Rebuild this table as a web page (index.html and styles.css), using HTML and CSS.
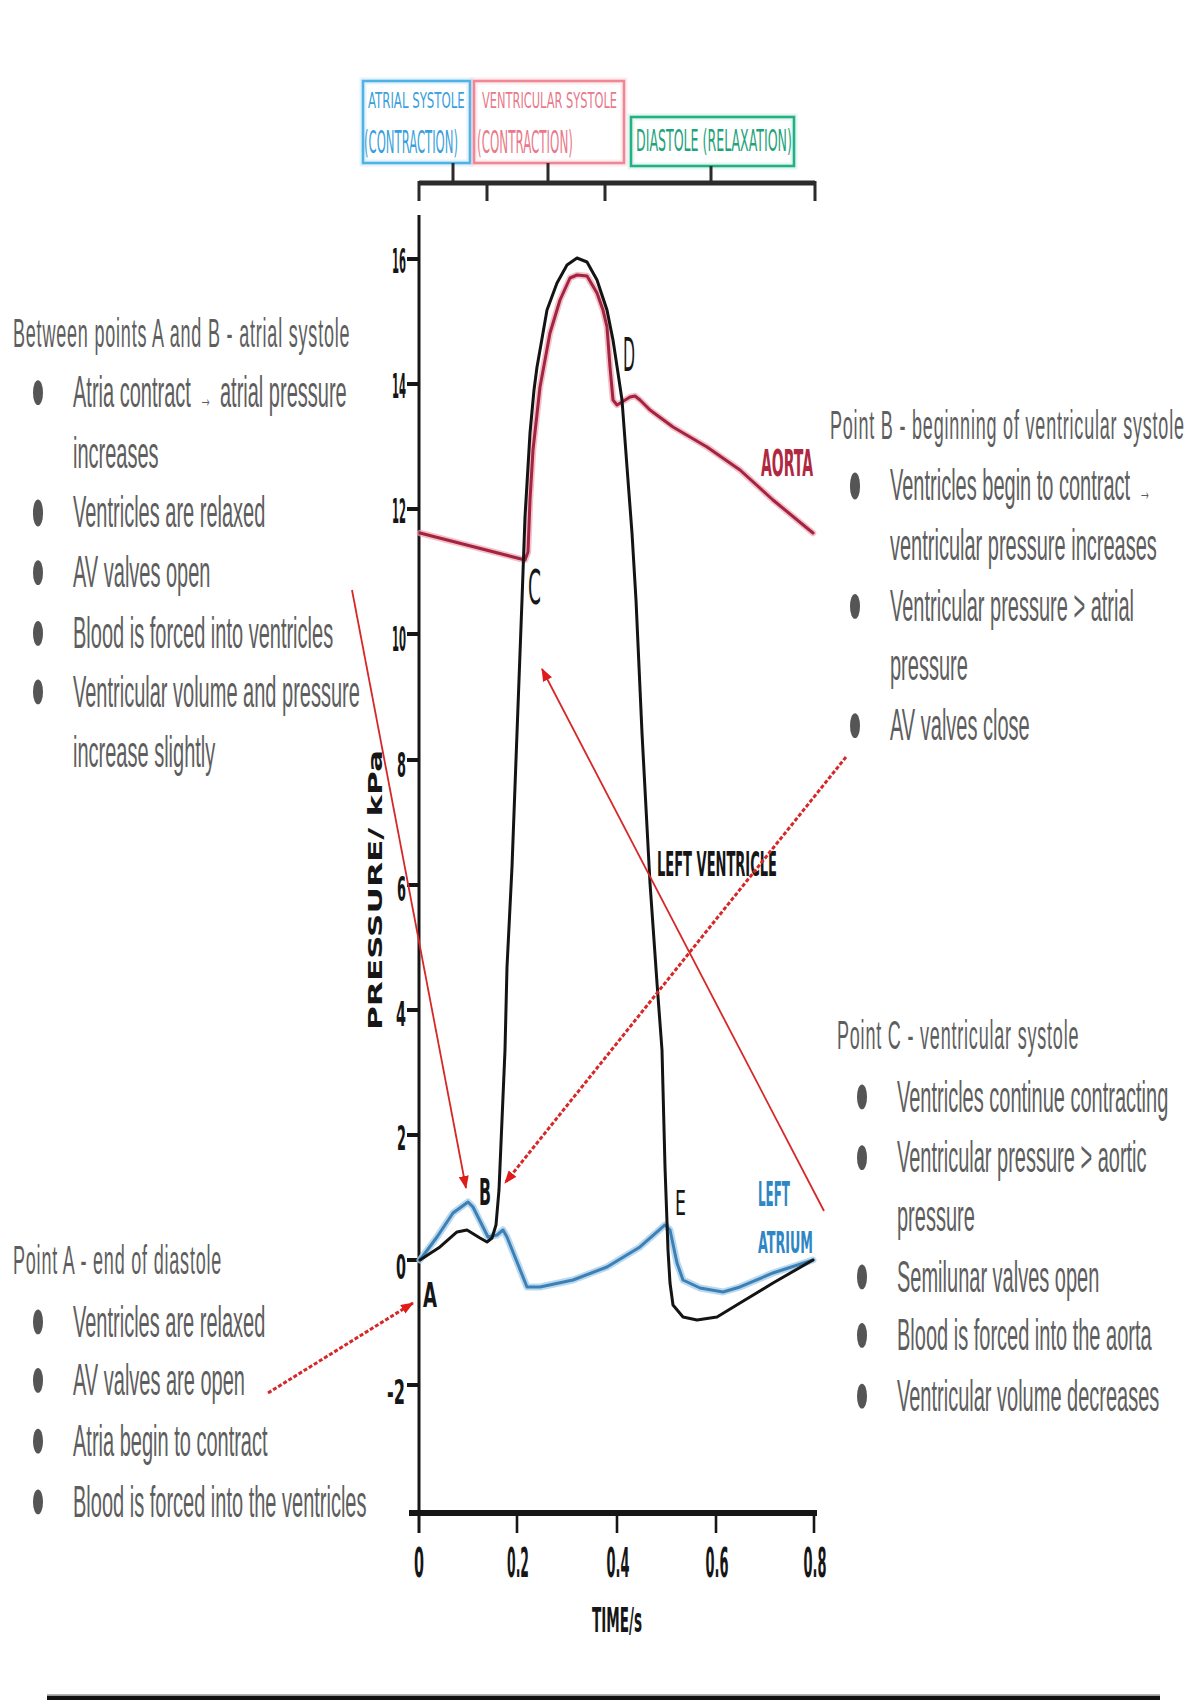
FILE: index.html
```html
<!DOCTYPE html>
<html lang="en">
<head>
<meta charset="utf-8">
<title>Cardiac cycle – pressure changes in the left side of the heart</title>
<link rel="stylesheet" href="styles.css">
</head>
<body>
<main class="page">
  <svg class="chart" viewBox="0 0 1200 1695" preserveAspectRatio="none" role="img" aria-label="Pressure changes during the cardiac cycle">
    <defs>
      <marker id="ah" viewBox="0 0 13 10" refX="12" refY="5" markerWidth="13" markerHeight="10" markerUnits="userSpaceOnUse" orient="auto">
        <path class="ah" d="M0,0 L13,5 L0,10 z"/>
      </marker>
    </defs>

    <!-- phase boxes -->
    <rect class="box-glow glow-blue" x="363" y="81" width="107" height="82"/>
    <rect class="box box-blue" x="363" y="81" width="107" height="82"/>
    <text class="hand t-blue ph-sm" transform="translate(368 108) scale(0.59 1)" textLength="164" lengthAdjust="spacingAndGlyphs">ATRIAL SYSTOLE</text>
    <text class="hand t-blue ph-lg" transform="translate(364 153) scale(0.4 1)" textLength="235" lengthAdjust="spacingAndGlyphs">(CONTRACTION)</text>

    <rect class="box-glow glow-pink" x="474" y="81" width="150" height="82"/>
    <rect class="box box-pink" x="474" y="81" width="150" height="82"/>
    <text class="hand t-pink ph-sm" transform="translate(482 108) scale(0.577 1)" textLength="234" lengthAdjust="spacingAndGlyphs">VENTRICULAR SYSTOLE</text>
    <text class="hand t-pink ph-lg" transform="translate(477 153) scale(0.41 1)" textLength="234" lengthAdjust="spacingAndGlyphs">(CONTRACTION)</text>

    <rect class="box-glow glow-green" x="631" y="117" width="163" height="49"/>
    <rect class="box box-green" x="631" y="117" width="163" height="49"/>
    <text class="hand t-green ph-md" transform="translate(636 151) scale(0.464 1)" textLength="336" lengthAdjust="spacingAndGlyphs">DIASTOLE (RELAXATION)</text>

    <!-- bracket -->
    <path class="ink-line bracket-h" d="M419,183 L815,183"/>
    <path class="ink-line bracket-v" d="M419,181 V201 M487,181 V201 M605,181 V201 M815,181 V201 M453,163 V183 M548,163 V183 M711,166 V183"/>

    <!-- axes -->
    <path class="ink-line y-axis" d="M419,215 V1533"/>
    <path class="ink-line x-axis" d="M409,1513 H817"/>
    <path class="ink-line x-ticks" d="M517,1513 V1533 M617,1513 V1533 M716,1513 V1533 M814,1513 V1533"/>
    <path class="ink-line y-ticks" d="M407,259 H419 M407,384 H419 M407,509 H419 M407,634 H419 M407,760 H419 M407,885 H419 M407,1010 H419 M407,1135 H419 M407,1260 H419 M407,1385 H419"/>

    <g class="hand ink tick-lbl">
      <text x="406" y="273" text-anchor="end" textLength="14" lengthAdjust="spacingAndGlyphs">16</text>
      <text x="406" y="398" text-anchor="end" textLength="14" lengthAdjust="spacingAndGlyphs">14</text>
      <text x="406" y="523" text-anchor="end" textLength="14" lengthAdjust="spacingAndGlyphs">12</text>
      <text x="406" y="651" text-anchor="end" textLength="14" lengthAdjust="spacingAndGlyphs">10</text>
      <text x="406" y="777" text-anchor="end" textLength="9" lengthAdjust="spacingAndGlyphs">8</text>
      <text x="406" y="901" text-anchor="end" textLength="9" lengthAdjust="spacingAndGlyphs">6</text>
      <text x="406" y="1026" text-anchor="end" textLength="10" lengthAdjust="spacingAndGlyphs">4</text>
      <text x="406" y="1150" text-anchor="end" textLength="9" lengthAdjust="spacingAndGlyphs">2</text>
      <text x="406" y="1279" text-anchor="end" textLength="10" lengthAdjust="spacingAndGlyphs">0</text>
      <text x="405" y="1404" text-anchor="end" textLength="18" lengthAdjust="spacingAndGlyphs">-2</text>
    </g>

    <g class="hand ink x-lbl">
      <text x="419" y="1577" text-anchor="middle" textLength="10" lengthAdjust="spacingAndGlyphs">0</text>
      <text x="518" y="1577" text-anchor="middle" textLength="22" lengthAdjust="spacingAndGlyphs">0.2</text>
      <text x="618" y="1577" text-anchor="middle" textLength="23" lengthAdjust="spacingAndGlyphs">0.4</text>
      <text x="717" y="1577" text-anchor="middle" textLength="23" lengthAdjust="spacingAndGlyphs">0.6</text>
      <text x="815" y="1577" text-anchor="middle" textLength="23" lengthAdjust="spacingAndGlyphs">0.8</text>
    </g>
    <text class="hand ink axis-title" x="617" y="1632" text-anchor="middle" textLength="50" lengthAdjust="spacingAndGlyphs">TIME/s</text>
    <text class="hand ink axis-title-y" x="382" y="890" text-anchor="middle" textLength="280" lengthAdjust="spacingAndGlyphs" transform="rotate(-90 382 890)">PRESSURE/ kPa</text>

    <!-- curves -->
    <polyline class="curve ao-halo" points="420,533 525,560 528,552 530,500 533,450 540,387 550,333 560,300 570,278 577,275 587,276 597,293 603,310 607,327 610,367 613,400 617,405 622,402 630,397 635,396 640,400 650,410 673,427 707,447 740,470 773,500 813,533"/>
    <polyline class="curve ao" points="420,533 525,560 528,552 530,500 533,450 540,387 550,333 560,300 570,278 577,275 587,276 597,293 603,310 607,327 610,367 613,400 617,405 622,402 630,397 635,396 640,400 650,410 673,427 707,447 740,470 773,500 813,533"/>

    <polyline class="curve la-halo" points="420,1260 437,1237 453,1213 468,1202 473,1207 488,1237 497,1235 503,1230 507,1237 527,1287 540,1287 573,1280 607,1267 640,1247 665,1225 670,1230 677,1263 683,1280 700,1288 723,1292 740,1287 773,1273 813,1260"/>
    <polyline class="curve la" points="420,1260 437,1237 453,1213 468,1202 473,1207 488,1237 497,1235 503,1230 507,1237 527,1287 540,1287 573,1280 607,1267 640,1247 665,1225 670,1230 677,1263 683,1280 700,1288 723,1292 740,1287 773,1273 813,1260"/>

    <polyline class="curve lv" points="420,1260 440,1247 457,1232 467,1230 480,1238 487,1242 492,1238 496,1225 499,1190 502,1120 505,1050 507,967 512,867 517,733 522,600 525,517 530,433 534,390 537,367 540,350 547,310 557,283 567,265 577,258 587,262 597,280 607,310 613,340 618,373 622,400 627,467 632,533 636,600 642,733 650,883 657,983 662,1050 665,1167 668,1250 670,1283 673,1305 683,1317 697,1320 717,1317 740,1303 773,1283 813,1260"/>

    <!-- curve labels -->
    <text class="hand t-aorta lbl-aorta" transform="translate(761 476) scale(0.394 1)" textLength="132" lengthAdjust="spacingAndGlyphs">AORTA</text>
    <text class="hand ink lbl-lv" x="657" y="876" textLength="120" lengthAdjust="spacingAndGlyphs">LEFT VENTRICLE</text>
    <text class="hand t-atrium lbl-la1" x="758" y="1206" textLength="32" lengthAdjust="spacingAndGlyphs">LEFT</text>
    <text class="hand t-atrium lbl-la2" x="758" y="1253" textLength="55" lengthAdjust="spacingAndGlyphs">ATRIUM</text>

    <g class="hand ink pt-lbl">
      <text class="pt-a" x="423" y="1307" textLength="14" lengthAdjust="spacingAndGlyphs">A</text>
      <text class="pt-b" x="479" y="1205" textLength="12" lengthAdjust="spacingAndGlyphs">B</text>
      <text class="pt-c" x="528" y="604" textLength="13" lengthAdjust="spacingAndGlyphs">C</text>
      <text class="pt-d" x="623" y="371" textLength="12" lengthAdjust="spacingAndGlyphs">D</text>
      <text class="pt-e" x="675" y="1215" textLength="11" lengthAdjust="spacingAndGlyphs">E</text>
    </g>

    <!-- annotation arrows -->
    <path class="arrow" d="M352,590 L466,1188" marker-end="url(#ah)"/>
    <path class="arrow dotted" d="M846,757 L505,1183" marker-end="url(#ah)"/>
    <path class="arrow" d="M824,1211 L542,669" marker-end="url(#ah)"/>
    <path class="arrow dotted" d="M268,1393 L413,1303" marker-end="url(#ah)"/>
  </svg>

  <section class="col col-left">
    <div class="note note-ab">
      <p class="note-title">Between points A and B - atrial systole</p>
      <ul class="points">
        <li>Atria contract <span class="arr">→</span> atrial pressure<br>increases</li>
        <li>Ventricles are relaxed</li>
        <li>AV valves open</li>
        <li>Blood is forced into ventricles</li>
        <li>Ventricular volume and pressure<br>increase slightly</li>
      </ul>
    </div>
    <div class="note note-a">
      <p class="note-title">Point A - end of diastole</p>
      <ul class="points">
        <li>Ventricles are relaxed</li>
        <li>AV valves are open</li>
        <li>Atria begin to contract</li>
        <li>Blood is forced into the ventricles</li>
      </ul>
    </div>
  </section>

  <section class="col col-right">
    <div class="note note-b">
      <p class="note-title">Point B - beginning of ventricular systole</p>
      <ul class="points">
        <li>Ventricles begin to contract <span class="arr">→</span><br>ventricular pressure increases</li>
        <li>Ventricular pressure &gt; atrial<br>pressure</li>
        <li>AV valves close</li>
      </ul>
    </div>
    <div class="note note-c">
      <p class="note-title">Point C - ventricular systole</p>
      <ul class="points">
        <li>Ventricles continue contracting</li>
        <li>Ventricular pressure &gt; aortic<br>pressure</li>
        <li>Semilunar valves open</li>
        <li>Blood is forced into the aorta</li>
        <li>Ventricular volume decreases</li>
      </ul>
    </div>
  </section>

  <div class="rule"></div>
</main>
</body>
</html>
```

FILE: styles.css
```css
html, body {
  margin: 0;
  padding: 0;
  background: #ffffff;
}

body {
  width: 1200px;
  height: 1700px;
  overflow: hidden;
}

/* The whole sheet is drawn at a squashed height and stretched vertically,
   as the original slide image was. */
.page {
  width: 1200px;
  height: 755.56px;
  display: grid;
  grid-template-columns: 390px 440px 370px;
  grid-template-rows: 753.33px 2.23px;
  transform: scaleY(2.25);
  transform-origin: 0 0;
  font-family: "Liberation Sans", Arial, sans-serif;
  color: #5e5e5e;
}

.chart {
  grid-column: 1 / -1;
  grid-row: 1;
  display: block;
  width: 1200px;
  height: 753.33px;
}

.col-left {
  grid-column: 1;
  grid-row: 1;
  padding: 134.7px 0 0 13px;
}

.col-right {
  grid-column: 3;
  grid-row: 1;
  padding: 175.9px 10px 0 0;
}

.note-a {
  margin-top: 199.9px;
}

.note-c {
  margin-top: 112px;
  margin-left: 7px;
}

.note-title {
  margin: 0;
  font-size: 18px;
  letter-spacing: 0.8px;
  line-height: 26.58px;
  white-space: nowrap;
}

.points {
  list-style: none;
  margin: 0;
  padding: 0 0 0 60px;
  font-size: 20px;
  line-height: 26.58px;
}

.points li {
  position: relative;
  white-space: nowrap;
}

.points li::before {
  content: "";
  position: absolute;
  left: -40px;
  top: 8px;
  width: 10px;
  height: 11.1px;
  border-radius: 50%;
  background: #555555;
}

.arr {
  font-size: 12px;
  line-height: 1;
  padding: 0 3px;
}

.rule {
  grid-column: 1 / -1;
  grid-row: 2;
  margin-left: 47px;
  width: 1113px;
  background: linear-gradient(#9a9a9a 0 25%, #111111 25% 100%);
}

/* ---------- chart ---------- */
.hand {
  font-family: "DejaVu Sans Condensed", "DejaVu Sans", sans-serif;
}

.ink { fill: #161616; font-weight: bold; }
.t-blue { fill: #3a9fdc; }
.t-pink { fill: #e9798a; }
.t-green { fill: #1ea37a; }
.t-aorta { fill: #b0283f; font-weight: bold; }
.t-atrium { fill: #2f86c4; font-weight: bold; }

.ph-sm { font-size: 22px; }
.ph-md { font-size: 30px; }
.ph-lg { font-size: 32px; }

.box {
  fill: none;
  stroke-width: 2.6;
}
.box-blue { stroke: #4fb2e6; }
.box-pink { stroke: #ee8796; }
.box-green { stroke: #22b084; }

.box-glow {
  fill: none;
  stroke-width: 7;
  opacity: 0.25;
}
.glow-blue { stroke: #8fd0f2; }
.glow-pink { stroke: #f6b3bd; }
.glow-green { stroke: #8fdcc0; }

.ink-line {
  fill: none;
  stroke: #161616;
  stroke-linecap: butt;
}
.bracket-h { stroke: #2b2b2b; stroke-width: 5; }
.bracket-v { stroke: #2b2b2b; stroke-width: 3; }
.y-axis { stroke-width: 3; }
.x-axis { stroke-width: 6; }
.x-ticks { stroke-width: 2.6; }
.y-ticks { stroke-width: 4; }

.tick-lbl { font-size: 34px; }
.x-lbl { font-size: 40px; }
.axis-title { font-size: 34px; }
.axis-title-y { font-size: 19px; }

.curve {
  fill: none;
  stroke-linejoin: round;
  stroke-linecap: round;
}
.lv { stroke: #141414; stroke-width: 3; }
.ao { stroke: #a4233f; stroke-width: 3; }
.ao-halo { stroke: #eba8b6; stroke-width: 6.5; opacity: 0.7; }
.la { stroke: #3c80b6; stroke-width: 3; }
.la-halo { stroke: #a9cfea; stroke-width: 7; opacity: 0.8; }

.lbl-aorta { font-size: 38px; }
.lbl-lv { font-size: 34px; }
.lbl-la1 { font-size: 34px; }
.lbl-la2 { font-size: 30px; }

.pt-a { font-size: 33px; }
.pt-b { font-size: 38px; }
.pt-c { font-size: 48px; font-weight: normal; }
.pt-d { font-size: 46px; font-weight: normal; }
.pt-e { font-size: 34px; font-weight: normal; }

.arrow {
  fill: none;
  stroke: #d62828;
  stroke-width: 1.8;
}
.arrow.dotted {
  stroke-width: 3;
  stroke-dasharray: 4 2;
}
.ah { fill: #e01b1b; }
```
